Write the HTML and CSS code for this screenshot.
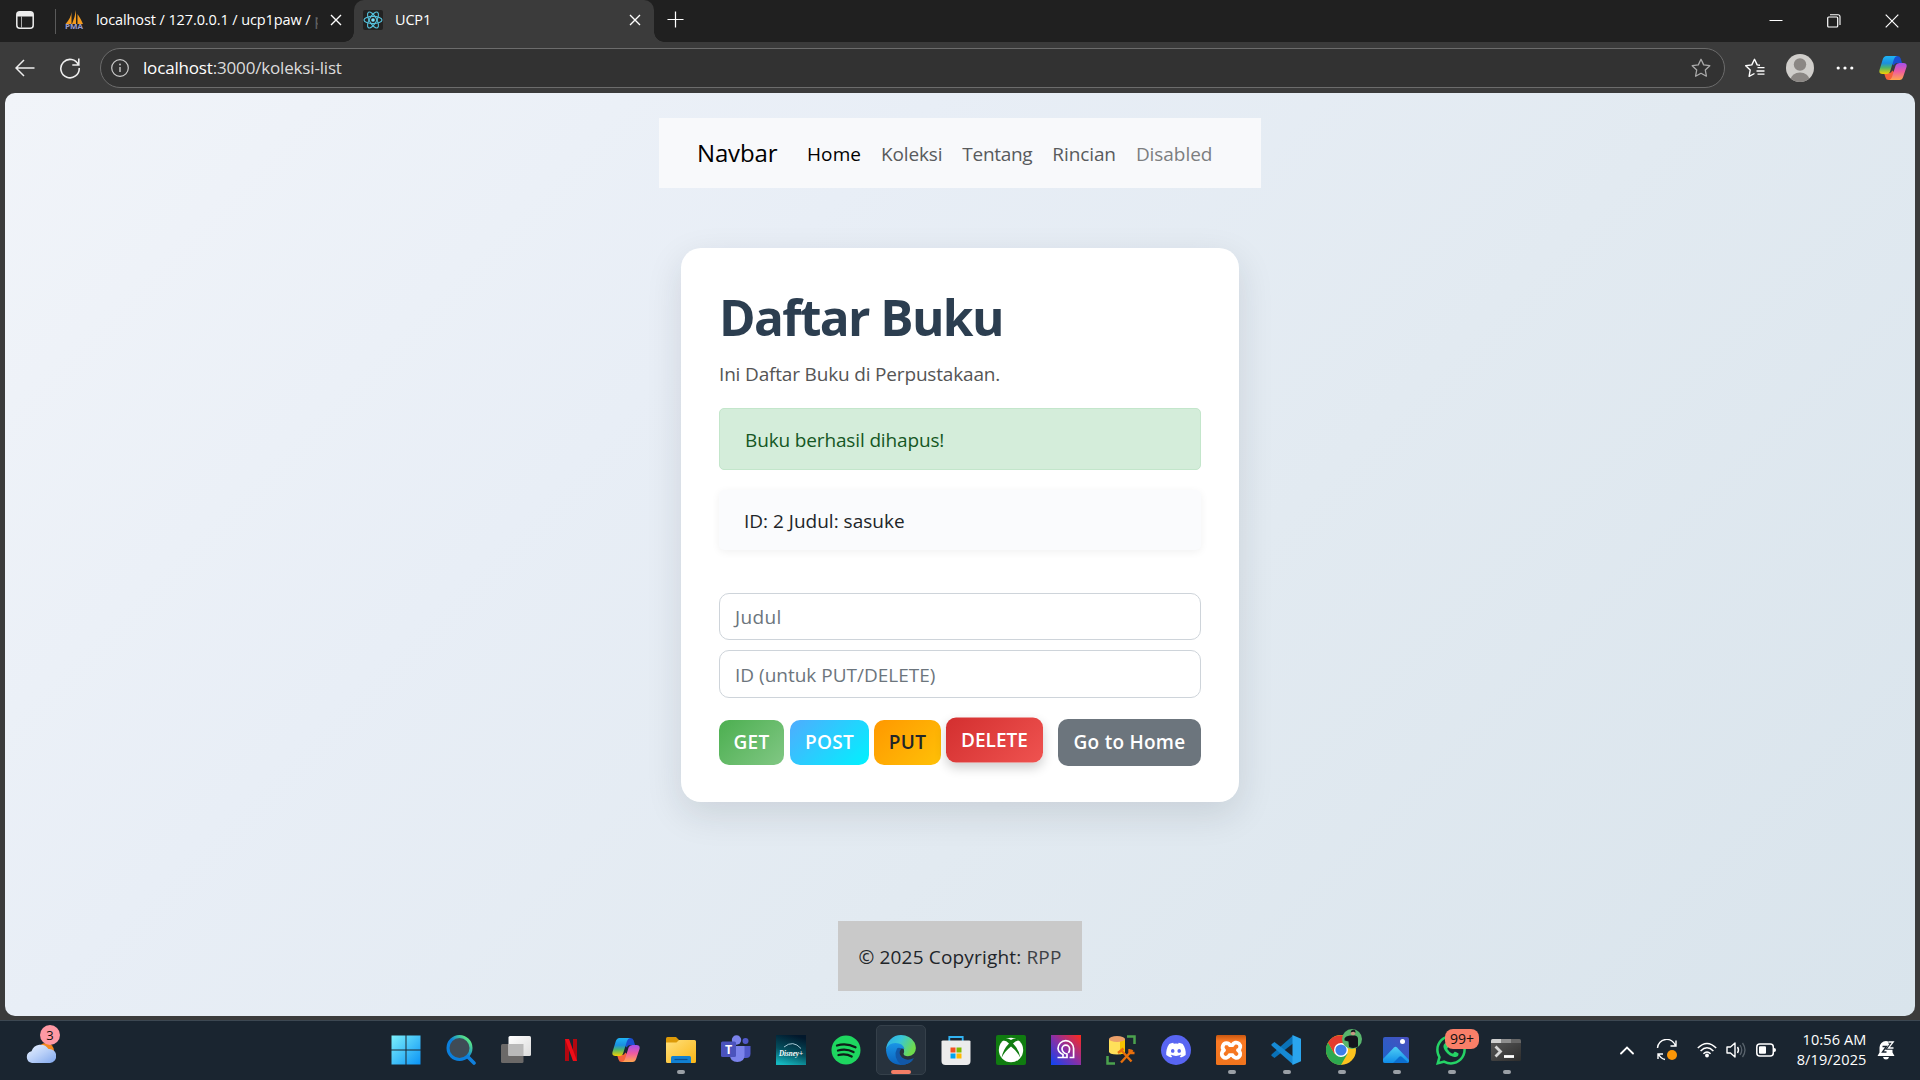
FILE: index.html
```html
<!DOCTYPE html>
<html lang="id">
<head>
<meta charset="utf-8">
<title>UCP1</title>
<link rel="stylesheet" href="styles.css">
</head>
<body>
<svg class="defs" aria-hidden="true">
  <defs>
    <linearGradient id="cpA" x1="0" y1="0" x2="0" y2="1"><stop offset="0" stop-color="#1fb4f4"/><stop offset=".4" stop-color="#1b8fe0"/><stop offset=".65" stop-color="#4fb56a"/><stop offset="1" stop-color="#f4d000"/></linearGradient>
    <linearGradient id="cpB" x1="0" y1="0" x2="0" y2="1"><stop offset="0" stop-color="#a34fec"/><stop offset=".5" stop-color="#ee5ba0"/><stop offset="1" stop-color="#ffa64d"/></linearGradient>
    <symbol id="copilot" viewBox="0 0 28 26">
      <path d="M14 1h4.500q2.500 0 3.200 2.500L23 8h-5q-2.500 0-3.300 2.500L12 8z" fill="#1a4fd0"/>
      <path d="M14 25H9.500Q7.200 25 6.500 22.500L5 18h5q2.500 0 3.300-2.500L16 18z" fill="#f4623a"/>
      <path d="M7.500 1H18q-2.200.3-3 3l-3.600 11.500Q10.500 19 7.500 19H3.500Q-.4 19 .5 15L3.700 4.500Q4.700 1 7.500 1z" fill="url(#cpA)"/>
      <path d="M20.500 25H10q2.200-.3 3-3l3.600-11.500Q17.500 8 20.500 8h4Q28.400 8 27.500 12l-3.200 9.500q-1 3.500-3.800 3.500z" fill="url(#cpB)"/>
    </symbol>
    <linearGradient id="win" x1="0" y1="0" x2="1" y2="1"><stop offset="0" stop-color="#7cf0fb"/><stop offset="1" stop-color="#0a93f5"/></linearGradient>
    <linearGradient id="lens" x1="0" y1="1" x2="1" y2="0"><stop offset=".5" stop-color="#0b7fdc"/><stop offset=".85" stop-color="#55e08a"/></linearGradient>
    <linearGradient id="tvA" x1="0" y1="0" x2="1" y2="1"><stop offset="0" stop-color="#fff"/><stop offset="1" stop-color="#dcdcdc"/></linearGradient>
    <linearGradient id="fold" x1="0" y1="0" x2="1" y2="1"><stop offset="0" stop-color="#ffe07c"/><stop offset="1" stop-color="#fbb615"/></linearGradient>
    <linearGradient id="dis" x1=".6" y1="0" x2=".3" y2="1"><stop offset="0" stop-color="#02182c"/><stop offset=".55" stop-color="#04505f"/><stop offset="1" stop-color="#15b8c0"/></linearGradient>
    <linearGradient id="edA" x1="0" y1="0" x2="1" y2=".4"><stop offset="0" stop-color="#2aa9ea"/><stop offset=".5" stop-color="#38c6d8"/><stop offset="1" stop-color="#6fdb4c"/></linearGradient>
    <linearGradient id="edB" x1="0" y1="0" x2="0" y2="1"><stop offset="0" stop-color="#1a95e6"/><stop offset="1" stop-color="#0b62bd"/></linearGradient>
    <linearGradient id="hd" x1="0" y1="1" x2="1" y2="0"><stop offset="0" stop-color="#0b45f5"/><stop offset=".5" stop-color="#8a2fa5"/><stop offset="1" stop-color="#ff2a1a"/></linearGradient>
    <linearGradient id="xam" x1="0" y1="0" x2="0" y2="1"><stop offset="0" stop-color="#c8560f"/><stop offset=".2" stop-color="#fb7a24"/><stop offset="1" stop-color="#f0741d"/></linearGradient>
    <linearGradient id="pho" x1="0" y1="1" x2="1" y2="0"><stop offset="0" stop-color="#1d63c8"/><stop offset="1" stop-color="#4a50c0"/></linearGradient>
    <linearGradient id="mtn" x1="0" y1="0" x2="0" y2="1"><stop offset="0" stop-color="#4fd0f5"/><stop offset="1" stop-color="#0f8be8"/></linearGradient>
    <linearGradient id="cld" x1="0" y1="0" x2="1" y2="1"><stop offset="0" stop-color="#eaf3ff"/><stop offset=".5" stop-color="#b9d0f8"/><stop offset="1" stop-color="#7fa6ec"/></linearGradient>
    <linearGradient id="trm" x1="0" y1="0" x2="1" y2="1"><stop offset="0" stop-color="#555"/><stop offset="1" stop-color="#2d2d2d"/></linearGradient>
  </defs>
</svg>

<header class="tabstrip">
  <svg class="tab-actions" viewBox="0 0 18 18"><rect x=".8" y=".8" width="16.400" height="16.400" rx="3" fill="none" stroke="#eee" stroke-width="1.500"/><path d="M1 3.500Q1 1 3.500 1h11Q17 1 17 3.500V5.500H1z" fill="#eee"/><path d="M5.500 5v12" stroke="#aaa" stroke-width="1"/></svg>
  <span class="strip-divider"></span>
  <div class="tab tab-idle">
    <svg class="favicon" viewBox="0 0 20 20"><path d="M7.500 2Q7 8 1.500 14h6zM12 0v14H8Q11 7 12 0zM13.500 4Q17 9 19 14h-5.500z" fill="#f29a1f"/><text x="1" y="19.300" textLength="18" lengthAdjust="spacingAndGlyphs" font-size="7.500" font-weight="700" fill="#9a9ed0">PMA</text></svg>
    <span class="tab-title"><span class="t idle-text">localhost / 127.0.0.1 / ucp1paw /</span><span class="cut">p</span></span>
    <svg class="tab-close" viewBox="0 0 12 12"><path d="M1 1l10 10M11 1L1 11" stroke="#fff" stroke-width="1.400"/></svg>
  </div>
  <div class="tab tab-active">
    <svg class="favicon" viewBox="0 0 20 20"><rect width="20" height="20" rx="2" fill="#222"/><g fill="none" stroke="#56c1dc" stroke-width="1.100"><ellipse cx="10" cy="10" rx="9" ry="3.600"/><ellipse cx="10" cy="10" rx="9" ry="3.600" transform="rotate(60 10 10)"/><ellipse cx="10" cy="10" rx="9" ry="3.600" transform="rotate(120 10 10)"/></g><circle cx="10" cy="10" r="1.800" fill="#7fe3fb"/></svg>
    <span class="tab-title"><span class="t active-text">UCP1</span></span>
    <svg class="tab-close" viewBox="0 0 12 12"><path d="M1 1l10 10M11 1L1 11" stroke="#fff" stroke-width="1.400"/></svg>
  </div>
  <svg class="new-tab" viewBox="0 0 18 18"><path d="M9 .5v17M.5 9h17" stroke="#fff" stroke-width="1.300"/></svg>
  <div class="window-buttons">
    <svg viewBox="0 0 14 14"><path d="M.5 6.500h13" stroke="#fff"/></svg>
    <svg viewBox="0 0 14 14"><rect x=".7" y="3" width="10" height="10" rx="1" fill="none" stroke="#fff" stroke-width="1.200"/><path d="M3 .8h8q2 0 2 2V11" fill="none" stroke="#fff" stroke-width="1.100"/></svg>
    <svg viewBox="0 0 14 14"><path d="M.7.7l12.600 12.600M13.300.7L.7 13.300" stroke="#fff" stroke-width="1.200"/></svg>
  </div>
</header>

<div class="toolbar">
  <svg class="back" viewBox="0 0 20 18"><path d="M19.500 9H1M9 1L1 9l8 8" fill="none" stroke="#eee" stroke-width="1.500"/></svg>
  <svg class="reload" viewBox="0 0 22 22"><path d="M19.500 8A9.200 9.200 0 1 0 20.200 11M19.800 1.500V8h-6.500" fill="none" stroke="#eee" stroke-width="1.600"/></svg>
  <div class="address">
    <svg class="info" viewBox="0 0 18 18"><circle cx="9" cy="9" r="8.300" fill="none" stroke="#ccc" stroke-width="1.200"/><path d="M9 8v5" stroke="#ccc" stroke-width="1.400"/><circle cx="9" cy="5.500" r=".9" fill="#ccc"/></svg>
    <span class="t url"><b>localhost</b>:3000/koleksi-list</span>
    <svg class="star" viewBox="0 0 20 20"><path d="M10 1.300l2.700 5.600 6.100.8-4.500 4.300 1.100 6.200L10 15.300l-5.400 2.900 1.100-6.200L1.200 7.700l6.100-.8z" fill="none" stroke="#aaa" stroke-width="1.300" stroke-linejoin="round"/></svg>
  </div>
  <svg class="favs" viewBox="0 0 20 20"><path d="M15.500 7.300L12.700 6.900 10 1.300 7.300 6.900l-6.100.8L5.700 12l-1.100 6.300L10 15.500" fill="none" stroke="#fff" stroke-width="1.400" stroke-linejoin="round"/><path d="M13 9.700h7M12 13h8M13 16.200h7" stroke="#fff" stroke-width="1.300"/></svg>
  <svg class="avatar" viewBox="0 0 28 28"><clipPath id="av"><circle cx="14" cy="14" r="14"/></clipPath><g clip-path="url(#av)"><rect width="28" height="28" fill="#d0cecb"/><circle cx="14" cy="10.500" r="6.200" fill="#8b8784"/><ellipse cx="14" cy="26" rx="9.500" ry="7.500" fill="#8b8784"/></g></svg>
  <svg class="dots" viewBox="0 0 18 4"><g fill="#fff"><circle cx="2.200" cy="2" r="1.600"/><circle cx="9" cy="2" r="1.600"/><circle cx="15.800" cy="2" r="1.600"/></g></svg>
  <svg class="copilot-btn"><use href="#copilot"/></svg>
</div>

<main class="viewport">
  <nav class="navbar">
    <div class="brand-box"><a class="t brand">Navbar</a></div>
    <div class="links">
      <a class="t link link-home">Home</a>
      <a class="t link link-koleksi">Koleksi</a>
      <a class="t link link-tentang">Tentang</a>
      <a class="t link link-rincian">Rincian</a>
      <a class="t link link-disabled">Disabled</a>
    </div>
  </nav>
  <section class="card">
    <h1><span class="t">Daftar Buku</span></h1>
    <p class="lead"><span class="t">Ini Daftar Buku di Perpustakaan.</span></p>
    <div class="alert"><span class="t">Buku berhasil dihapus!</span></div>
    <div class="item"><span class="t">ID: 2 Judul: sasuke</span></div>
    <div class="field field-judul"><span class="t">Judul</span></div>
    <div class="field field-id"><span class="t">ID (untuk PUT/DELETE)</span></div>
    <div class="actions">
      <button class="btn get">GET</button>
      <button class="btn post">POST</button>
      <button class="btn put">PUT</button>
      <button class="btn delete">DELETE</button>
      <button class="btn home">Go to Home</button>
    </div>
  </section>
  <footer class="copyright"><span class="t">© 2025 Copyright: <a>RPP</a></span></footer>
</main>

<div class="taskbar">
  <div class="weather">
    <svg viewBox="0 0 30 24"><circle cx="20" cy="12" r="8" fill="#f5871f"/><path d="M6 24a6 6 0 0 1-.5-11.800A9.500 9.500 0 0 1 22.500 10 7 7 0 0 1 24 24z" fill="url(#cld)"/></svg>
    <span class="count">3</span>
  </div>
  <div class="apps">
    <div class="slot"><svg viewBox="0 0 30 30"><path d="M.5.500h14v14H.5zM15.500.500h14v14h-14zM.5 15.500h14v14H.5zM15.500 15.500h14v14h-14z" fill="url(#win)"/></svg></div>
    <div class="slot"><svg viewBox="0 0 30 30"><circle cx="13.500" cy="13" r="11.500" fill="#3f4b56" stroke="url(#lens)" stroke-width="3"/><path d="M22 22l6 6" stroke="#1180dc" stroke-width="3.600" stroke-linecap="round"/></svg></div>
    <div class="slot"><svg viewBox="0 0 30 30"><rect y="9" width="22.500" height="19" rx="1.500" fill="#6b6968"/><rect x="7.500" y="1" width="22.500" height="20" rx="1.500" fill="url(#tvA)"/><path d="M7.500 9h15v12h-15z" fill="#b9b9b9"/></svg></div>
    <div class="slot"><svg viewBox="0 0 30 30"><path d="M9 4h4v22H9zM17 4h4v22h-4z" fill="#b20710"/><path d="M9 4h4l8 22h-4z" fill="#ee0d18"/></svg></div>
    <div class="slot"><svg viewBox="-1 -2 30 30"><use href="#copilot" width="28" height="26"/></svg></div>
    <div class="slot running"><svg viewBox="0 0 30 30"><path d="M0 3.500Q0 2 1.500 2H10l3.500 3.500V10H0z" fill="#dd9a08"/><path d="M0 7.500h10.500L13 5h15.500Q30 5 30 6.500v20q0 1.500-1.500 1.500h-27Q0 28 0 26.500z" fill="url(#fold)"/><path d="M5 28v-5.500Q5 21 6.500 21h17q1.500 0 1.500 1.500V28z" fill="#1180d2"/><path d="M8.500 24.500h13" stroke="#0b4f91" stroke-width="1.200"/></svg></div>
    <div class="slot"><svg viewBox="0 0 30 30"><circle cx="24.500" cy="6" r="3" fill="#5059c9"/><path d="M20 11h9.500v7.500q0 4.500-4.500 4.500h-3z" fill="#5059c9"/><circle cx="15.500" cy="5" r="4.700" fill="#7b83eb"/><path d="M9 11h14.500v9.500q0 6.500-7.200 6.500T9 20.500z" fill="#7b83eb"/><rect y="6.500" width="15" height="15.500" rx="1.500" fill="#4b53bc"/><text x="7.500" y="18.800" font-size="12.500" font-weight="700" text-anchor="middle" fill="#fff">T</text></svg></div>
    <div class="slot"><svg viewBox="0 0 30 30"><path d="M0 0h30v30H0z" fill="url(#dis)"/><path d="M8 12Q17 4.500 25 13.500" fill="none" stroke="#b8d8e4" stroke-width=".9"/><text x="3" y="20.500" class="script" textLength="24" lengthAdjust="spacingAndGlyphs" fill="#fff">Disney+</text></svg></div>
    <div class="slot"><svg viewBox="0 0 30 30"><circle cx="15" cy="15" r="14.500" fill="#1ed760"/><path d="M6 10.500q9.500-2.800 18.500 1.800M7 15.500q8.500-2.300 15.500 1.600M7.500 20q7.500-1.800 13.200 1.500" fill="none" stroke="#0e1d18" stroke-width="2.300" stroke-linecap="round"/></svg></div>
    <div class="slot focused"><svg viewBox="0 0 30 30"><path d="M0 15A15 15 0 0 1 15 0q9 0 13.500 7.500Q31.500 14 28 18.500q-3 3.300-8 2.500-3.500-.8-2-3.500Q19 9 9 9 2 9 0 15z" fill="url(#edA)"/><path d="M0 15Q2 8 9.500 8 17 8 18.500 14 12 12 11.500 18.500q.5 8.500 10.500 8 3 0 5.500-2.200Q23 30 15 30 1 29 0 15z" fill="url(#edB)"/><path d="M11 13.500Q6.500 22 15 30 24 29.500 28 23q-7 3.500-12-.5-4.500-4.500-.5-9-3-1.500-4.500 0z" fill="#1258a8"/></svg></div>
    <div class="slot"><svg viewBox="0 0 30 30"><path d="M8.300 9V2h13.400v7" fill="none" stroke="#31b3f2" stroke-width="1.800"/><path d="M.5 6.500Q.5 5.500 2 5.500h26q1.500 0 1.500 1V26q0 4-4 4h-21q-4 0-4-4z" fill="#ececec"/><path d="M9.500 12.500h5v5h-5z" fill="#f25022"/><path d="M15.500 12.500h5v5h-5z" fill="#7fba00"/><path d="M9.500 18.500h5v5h-5z" fill="#00a4ef"/><path d="M15.500 18.500h5v5h-5z" fill="#ffb900"/></svg></div>
    <div class="slot"><svg viewBox="0 0 30 30"><rect width="30" height="30" rx="2" fill="#107c10"/><circle cx="15" cy="15" r="12.200" fill="#fff"/><path d="M6.500 5.500Q9.500 2 15 5q5.500-3 8.500.5-3.500-.5-6.500 3Q23 14.500 24.500 23q-3-6.500-9.500-11.500Q8.500 16.500 5.500 23 7 14.500 13 8.500q-3-3.500-6.500-3z" fill="#107c10"/></svg></div>
    <div class="slot"><svg viewBox="0 0 30 30"><path d="M0 0h30v30H0z" fill="url(#hd)"/><path d="M6.500 22.500H12v-3Q7.500 17.500 7 13.500a7.800 7.800 0 0 1 15.600 0v9h-4M12.500 22.500h3.500v-3.500q-4.500-1-5-5a3.800 3.800 0 0 1 7.600 0q0 2.500-1.300 4" fill="none" stroke="#fff" stroke-width="1.700"/></svg></div>
    <div class="slot"><svg viewBox="0 0 30 30"><path d="M21 1.500h7.500V9M1.500 21v7.500H9" fill="none" stroke="#4ba24d" stroke-width="2.500"/><path d="M3 4v12.500q0 3 8 3t8-3V4z" fill="#ffe05a"/><path d="M14 4h5v12.500q0 2-5 2.800z" fill="#f5c400"/><ellipse cx="11" cy="4" rx="8" ry="3" fill="#eba06a"/><path d="M15 27.500L26.500 15M25.500 26.500L15.500 15.500M12 18l5.500-4.500M23.500 14v4h5" fill="none" stroke="#e86f0c" stroke-width="2.400"/></svg></div>
    <div class="slot"><svg viewBox="0 0 30 30"><circle cx="15" cy="15" r="15" fill="#5865f2"/><g transform="translate(5.200 5.400) scale(1.220)"><path fill="#fff" d="M13.545 2.907a13.227 13.227 0 0 0-3.257-1.011.05.05 0 0 0-.052.025c-.141.25-.297.577-.406.833a12.190 12.190 0 0 0-3.658 0 8.258 8.258 0 0 0-.412-.833.051.051 0 0 0-.052-.025c-1.125.194-2.220.534-3.257 1.011C.356 6.024-.213 9.047.066 12.032a13.276 13.276 0 0 0 4.016 2.057c.33-.44.600-.9.874-1.348a8.875 8.875 0 0 1-1.276-.665l.319-.24c2.619 1.196 5.454 1.196 8.041 0l.32.240a8.254 8.254 0 0 1-1.280.665c.24.465.515.909.874 1.348a13.235 13.235 0 0 0 4.001-2.057c.334-3.451-.559-6.449-2.410-9.125Zm-8.198 7.307c-.789 0-1.438-.724-1.438-1.612 0-.889.637-1.613 1.438-1.613.807 0 1.450.73 1.438 1.613 0 .888-.637 1.612-1.438 1.612Zm5.316 0c-.788 0-1.438-.724-1.438-1.612 0-.889.637-1.613 1.438-1.613.807 0 1.451.73 1.438 1.613 0 .888-.631 1.612-1.438 1.612Z"/></g></svg></div>
    <div class="slot running"><svg viewBox="0 0 30 30"><rect width="30" height="30" rx="1.500" fill="url(#xam)"/><path d="M10.500 8.200a4 4 0 0 0-2.500 7.000 4 4 0 1 0 5.500 5h3a4 4 0 1 0 5.500-5 4 4 0 1 0-5.500-5h-2.500a4 4 0 0 0-3.500-2z" fill="none" stroke="#fff" stroke-width="3.800" stroke-linejoin="round"/></svg></div>
    <div class="slot running"><svg viewBox="0 0 30 30"><path d="M22 .5v8L3.500 23 .8 21q-1-.8 0-1.800z" fill="#0a72b8"/><path d="M22 29.500v-8L3.500 7 .8 9q-1 .8 0 1.800z" fill="#168ad4"/><path d="M21.500 0L30 3.800v22.400L21.500 30z" fill="#2aa5ee"/></svg></div>
    <div class="slot running"><svg viewBox="0 0 30 30"><circle cx="15" cy="15" r="15" fill="#fcc31e"/><path d="M2 7.500A15 15 0 0 0 15 30l6.500-11.300L15 15 8.500 18.700z" fill="#2da94f"/><path d="M2 7.500l6.500 11.200L15 8h13A15 15 0 0 0 2 7.500z" fill="#e33b2e"/><circle cx="15" cy="15" r="7" fill="#fff"/><circle cx="15" cy="15" r="5.600" fill="#3c7ee8"/></svg>
      <svg class="profile" viewBox="0 0 20 20"><circle cx="10" cy="10" r="10" fill="#58b56c"/><path d="M2.500 9.500Q3.500 7 8 6.500h5q3 .5 3 3.500v7.500q-4 2.500-9 .5l-.5-5.500-4-1z" fill="#14141c"/><circle cx="11" cy="4" r="2.300" fill="#c99a84"/><path d="M8.500 3.500Q9 .5 11.500.8q2.300.2 2 3l-2-1z" fill="#1b1b20"/></svg></div>
    <div class="slot running"><svg viewBox="0 0 30 30"><rect x="2" y="2" width="26" height="26" rx="2" fill="url(#pho)"/><path d="M2 24L13 12.500q1.500-1.500 3 0L28 25v1q0 2-2 2H4q-2 0-2-2z" fill="url(#mtn)"/><path d="M12 28l6-6q1.500-1.500 3 0l6 5.500-1 .5z" fill="#0c6fd0"/><circle cx="21.500" cy="6.500" r="2.500" fill="#fff"/></svg></div>
    <div class="slot running"><svg viewBox="0 0 16 16"><path fill="#25d366" d="M13.601 2.326A7.854 7.854 0 0 0 7.994 0C3.627 0 .068 3.558.064 7.926c0 1.399.366 2.760 1.057 3.965L0 16l4.204-1.102a7.933 7.933 0 0 0 3.790.965h.004c4.368 0 7.926-3.558 7.930-7.930A7.898 7.898 0 0 0 13.600 2.326zM7.994 14.521a6.573 6.573 0 0 1-3.356-.92l-.24-.144-2.494.654.666-2.433-.156-.251a6.560 6.560 0 0 1-1.007-3.505c0-3.626 2.957-6.584 6.591-6.584a6.560 6.560 0 0 1 4.660 1.931 6.557 6.557 0 0 1 1.928 4.660c-.004 3.639-2.961 6.592-6.592 6.592zm3.615-4.934c-.197-.099-1.170-.578-1.353-.646-.182-.065-.315-.099-.445.099-.133.197-.513.646-.627.775-.114.133-.232.148-.43.050-.197-.1-.836-.308-1.592-.985-.59-.525-.985-1.175-1.103-1.372-.114-.198-.011-.304.088-.403.087-.088.197-.232.296-.346.1-.114.133-.198.198-.33.065-.134.034-.248-.015-.347-.05-.099-.445-1.076-.612-1.470-.16-.389-.323-.335-.445-.34-.114-.007-.247-.007-.38-.007a.729.729 0 0 0-.529.247c-.182.198-.691.677-.691 1.654 0 .977.710 1.916.810 2.049.098.133 1.394 2.132 3.383 2.992.47.205.840.326 1.129.418.475.152.904.129 1.246.080.38-.058 1.171-.48 1.338-.943.164-.464.164-.86.114-.943-.049-.084-.182-.133-.38-.232z"/></svg><span class="unread">99+</span></div>
    <div class="slot running"><svg viewBox="0 0 30 30"><path d="M1.500 4H10v5H0V5.500Q0 4 1.500 4z" fill="#cfcfcf"/><path d="M10 4h10v5H10z" fill="#8e8e8e"/><path d="M20 4h8.500Q30 4 30 5.500V9H20z" fill="#666"/><path d="M0 8h30v16.500q0 1.500-1.500 1.500h-27Q0 26 0 24.500z" fill="url(#trm)"/><path d="M4.500 11.500l5 5-5 5" fill="none" stroke="#d5d5d5" stroke-width="2.800"/><path d="M13 21.500h10" stroke="#fff" stroke-width="2.800"/></svg></div>
  </div>
  <div class="tray">
    <svg class="chev" viewBox="0 0 14 10"><path d="M1 8.500l6-6 6 6" fill="none" stroke="#fff" stroke-width="1.800" stroke-linecap="round"/></svg>
    <svg class="sync" viewBox="0 0 22 22"><path d="M1.500 9A9.300 9.300 0 0 1 19.500 6.500M20 1.500v5.500h-5.500M9 20.500A9.300 9.300 0 0 1 2.500 15M2 20v-5h5" fill="none" stroke="#fff" stroke-width="1.400"/><circle cx="16" cy="16" r="5" fill="#fb9607"/></svg>
    <svg class="wifi" viewBox="0 0 20 16"><path d="M.8 6Q10-3 19.200 6M3.600 9Q10 2.500 16.400 9M6.400 11.800Q10 8.200 13.600 11.800" fill="none" stroke="#fff" stroke-width="1.500"/><circle cx="10" cy="13.500" r="1.900" fill="#fff"/></svg>
    <svg class="vol" viewBox="0 0 20 18"><path d="M1 6h3.500L9 2v14l-4.500-4H1z" fill="none" stroke="#fff" stroke-width="1.400" stroke-linejoin="round"/><path d="M11.500 6q2 3 0 6" fill="none" stroke="#fff" stroke-width="1.400"/><path d="M14 4q3.500 5 0 10M16.500 2q5 7 0 14" fill="none" stroke="#59636c" stroke-width="1.300"/></svg>
    <svg class="bat" viewBox="0 0 20 14"><rect x=".8" y="1" width="16.500" height="12" rx="3" fill="none" stroke="#fff" stroke-width="1.500"/><rect x="3" y="3.200" width="7" height="7.600" rx="1" fill="#fff"/><path d="M18 5q2 0 2 2t-2 2z" fill="#fff"/></svg>
    <div class="clock"><span class="t">10:56 AM</span><span class="t">8/19/2025</span></div>
    <svg class="bell" viewBox="0 0 18 20"><path d="M2.500 7.500a6.500 6.500 0 0 1 13 0v5l2 3.500h-17l2-3.500zM6 17h6q-.5 2.500-3 2.500T6 17z" fill="#fff"/><path d="M5.500 6.500h4l-4 5.500h4" fill="none" stroke="#1a2530" stroke-width="1.400"/><path d="M11.500 2h4.700l-4.700 6h5" fill="none" stroke="#1a2530" stroke-width="3.400"/><path d="M11.500 2h4.700l-4.700 6h5" fill="none" stroke="#fff" stroke-width="1.300"/></svg>
  </div>
</div>
</body>
</html>
```
FILE: styles.css
```css
* { box-sizing: border-box; }
body {
  margin: 0;
  width: 1920px;
  height: 1080px;
  overflow: hidden;
  background: #3b3b3b;
  font-family: "Open Sans", "Noto Sans", sans-serif;
  font-size: 19px;
  line-height: 30px;
  color: #212529;
  display: flex;
  flex-direction: column;
}
svg { display: block; flex: none; }
.defs { position: absolute; width: 0; height: 0; }
.t { display: inline-block; white-space: pre; }
.script { font: italic 700 9px "Liberation Serif", serif; }

/* Tab strip */
.tabstrip { height: 42px; background: #202020; display: flex; align-items: center; color: #fff; font-size: 14.500px; }
.tab-actions { width: 18px; height: 18px; margin-left: 16px; margin-bottom: 2px; }
.strip-divider { width: 1px; height: 25px; margin-left: 21px; background: #5a5a5a; }
.tab { height: 42px; display: flex; align-items: center; padding-bottom: 2px; }
.tab-idle { width: 298px; padding-left: 8px; }
.tab-active { position: relative; width: 300px; padding-left: 9px; background: #3b3b3b; border-radius: 10px 10px 0 0; }
.tab-active::before, .tab-active::after { content: ""; position: absolute; bottom: 0; width: 10px; height: 10px; }
.tab-active::before { left: -10px; background: radial-gradient(circle at 0 0, #202020 9.500px, #3b3b3b 10px); }
.tab-active::after { right: -10px; background: radial-gradient(circle at 100% 0, #202020 9.500px, #3b3b3b 10px); }
.favicon { width: 20px; height: 20px; }
.tab-title { width: 222px; margin-left: 12px; line-height: 20px; white-space: nowrap; overflow: hidden; }
.idle-text { letter-spacing: -.1px; }
.active-text { letter-spacing: -.18px; }
.cut { opacity: .3; margin-left: 4px; display: inline-block; width: 3px; overflow: hidden; vertical-align: top; }
.tab-close { width: 12px; height: 12px; margin-left: 11.500px; }
.new-tab { width: 17px; height: 17px; margin: 0 0 3px 13px; }
.window-buttons { margin-left: auto; margin-right: 21.500px; display: flex; gap: 44px; }
.window-buttons svg { width: 14px; height: 14px; }

/* Toolbar */
.toolbar { height: 51px; display: flex; align-items: center; }
.back { width: 20px; height: 18px; margin-left: 15px; }
.reload { width: 22px; height: 22px; margin-left: 24px; }
.address { width: 1625px; height: 40px; margin-left: 19px; border: 1px solid #6c6c6c; border-radius: 20px; background: #323232; display: flex; align-items: center; padding: 0 13px 0 10px; }
.info { width: 18px; height: 18px; }
.url { margin-left: 14px; font-size: 17px; line-height: 24px; letter-spacing: -.17px; color: #dcdcdc; }
.url b { font-weight: 400; color: #fff; }
.star { width: 20px; height: 20px; margin-left: auto; }
.favs { width: 21px; height: 20px; margin-left: 19px; }
.avatar { width: 28px; height: 28px; margin-left: 21px; }
.dots { width: 18px; height: 4px; margin-left: 22px; }
.copilot-btn { width: 28px; height: 26px; margin-left: 25px; }

/* Page */
.viewport { height: 923px; margin: 0 5px; border-radius: 10px; background: linear-gradient(135deg, #f1f4f9 0%, #e8eef6 33%, #e2eaf1 60%, #d9e4ec 100%); display: flex; flex-direction: column; align-items: center; padding-top: 25px; }
.viewport .t { transform: translateY(1px); }
.navbar { width: 602px; height: 70px; background: #f8f9fb; display: flex; align-items: center; padding-left: 38px; }
.brand-box { width: 110px; line-height: 38px; }
.brand { font-size: 24px; letter-spacing: -.15px; color: #000; }
.links { display: flex; gap: 20px; }
.link { color: #595b5d; }
.link-home { letter-spacing: .1px; color: #000; }
.link-koleksi { letter-spacing: -.16px; }
.link-tentang { letter-spacing: -.3px; }
.link-rincian { letter-spacing: -.11px; }
.link-disabled { letter-spacing: -.06px; color: #7c7e80; }
.card { width: 558px; height: 554px; margin-top: 60px; padding: 38px 38px 0; border-radius: 20px; background: #fff; box-shadow: 0 12px 36px rgba(22, 31, 41, .12); display: flex; flex-direction: column; }
.card > * { flex: none; }
h1 { margin: 0; font-size: 49.500px; line-height: 60px; letter-spacing: -1.600px; font-weight: 700; color: #2c3e50; }
.lead { height: 30px; margin: 12px 0 20px; letter-spacing: -.17px; color: #555; }
.alert { height: 62px; padding: 15px 25px; border: 1px solid #c3e6cb; border-radius: 5px; background: #d4edda; letter-spacing: -.14px; color: #155724; }
.item { height: 60px; margin: 20px 0 43px; padding: 15px 25px; border-radius: 5px; background: #fafbfd; box-shadow: 0 2px 8px rgba(0, 0, 0, .06); }
.field { height: 47px; margin-bottom: 10px; padding: 7px 15px; border: 1px solid #ced4da; border-radius: 10px; color: #6c757d; }
.field-judul { letter-spacing: .35px; }
.field-id { height: 48px; padding-top: 8px; }
.actions { margin-top: 10px; display: flex; align-items: center; height: 48px; gap: 5px; }
.btn { height: 45px; padding: 0; border: 0; border-radius: 10px; font: 600 19px/30px "Open Sans", "Noto Sans", sans-serif; letter-spacing: .25px; color: #fff; white-space: nowrap; }
.get { width: 65px; background: linear-gradient(135deg, #4caf50, #81c784); }
.post { width: 79px; margin-left: 1px; background: linear-gradient(135deg, #4facfe, #00f2fe); }
.put { width: 67px; background: linear-gradient(135deg, #ff9800, #ffc107); color: #212529; }
.delete { width: 97px; background: linear-gradient(135deg, #d32f2f, #ef5350); letter-spacing: .03px; transform: translateY(-2.500px); box-shadow: 0 5px 12px rgba(0, 0, 0, .2); }
.home { width: 143px; height: 47px; margin-left: auto; background: #6c757d; }
.copyright { width: 244px; height: 70px; margin-top: 119px; padding: 20px 0; background: #c9c9c9; letter-spacing: .17px; text-align: center; }
.copyright a { color: #3d4146; }

/* Taskbar */
.taskbar { height: 60px; margin-top: auto; padding-bottom: 2px; background: #1a2530; border-top: 1px solid #3d4852; display: flex; align-items: center; color: #fff; flex: none; }
.weather { position: relative; width: 30px; height: 24px; margin: 2px 0 0 26px; }
.weather svg { width: 30px; height: 24px; }
.count { position: absolute; left: 14px; top: -14px; width: 20px; height: 20px; border-radius: 50%; background: #ff99a4; color: #111; font-size: 13px; line-height: 20px; text-align: center; }
.apps { margin-left: 322px; display: flex; }
.slot { position: relative; width: 55.060px; height: 50px; display: grid; place-items: center; }
.slot > svg { width: 30px; height: 30px; }
.slot.running::after { content: ""; position: absolute; left: 24px; bottom: 1px; width: 8px; height: 4px; border-radius: 2px; background: #9aa0a6; }
.slot.focused::before { content: ""; position: absolute; inset: 0 2.500px; border: 1px solid #35404a; border-radius: 5px; background: #27323d; }
.slot.focused > svg { position: relative; }
.slot.focused::after { content: ""; position: absolute; left: 18px; bottom: 1px; width: 20px; height: 4px; border-radius: 2px; background: #f47e66; }
.slot > .profile { position: absolute; left: 28px; top: 4px; width: 20px; height: 20px; }
.unread { position: absolute; left: 21px; top: 4px; width: 34px; height: 20px; border-radius: 8px; background: #f97f68; color: #111; font-size: 14px; line-height: 20px; text-align: center; }
.tray { margin-left: auto; margin-right: 25.500px; display: flex; align-items: center; }
.chev { width: 14px; height: 10px; margin-right: 22px; }
.sync { width: 22px; height: 22px; margin-right: 19px; }
.wifi { width: 20px; height: 16px; margin-right: 9px; }
.vol { width: 20px; height: 18px; margin-right: 10px; }
.bat { width: 20px; height: 14px; margin-right: 20px; }
.clock { width: 71px; display: flex; flex-direction: column; align-items: flex-end; font-size: 14.500px; line-height: 20px; letter-spacing: .13px; }
.bell { width: 18px; height: 20px; margin-left: 10px; }
```
